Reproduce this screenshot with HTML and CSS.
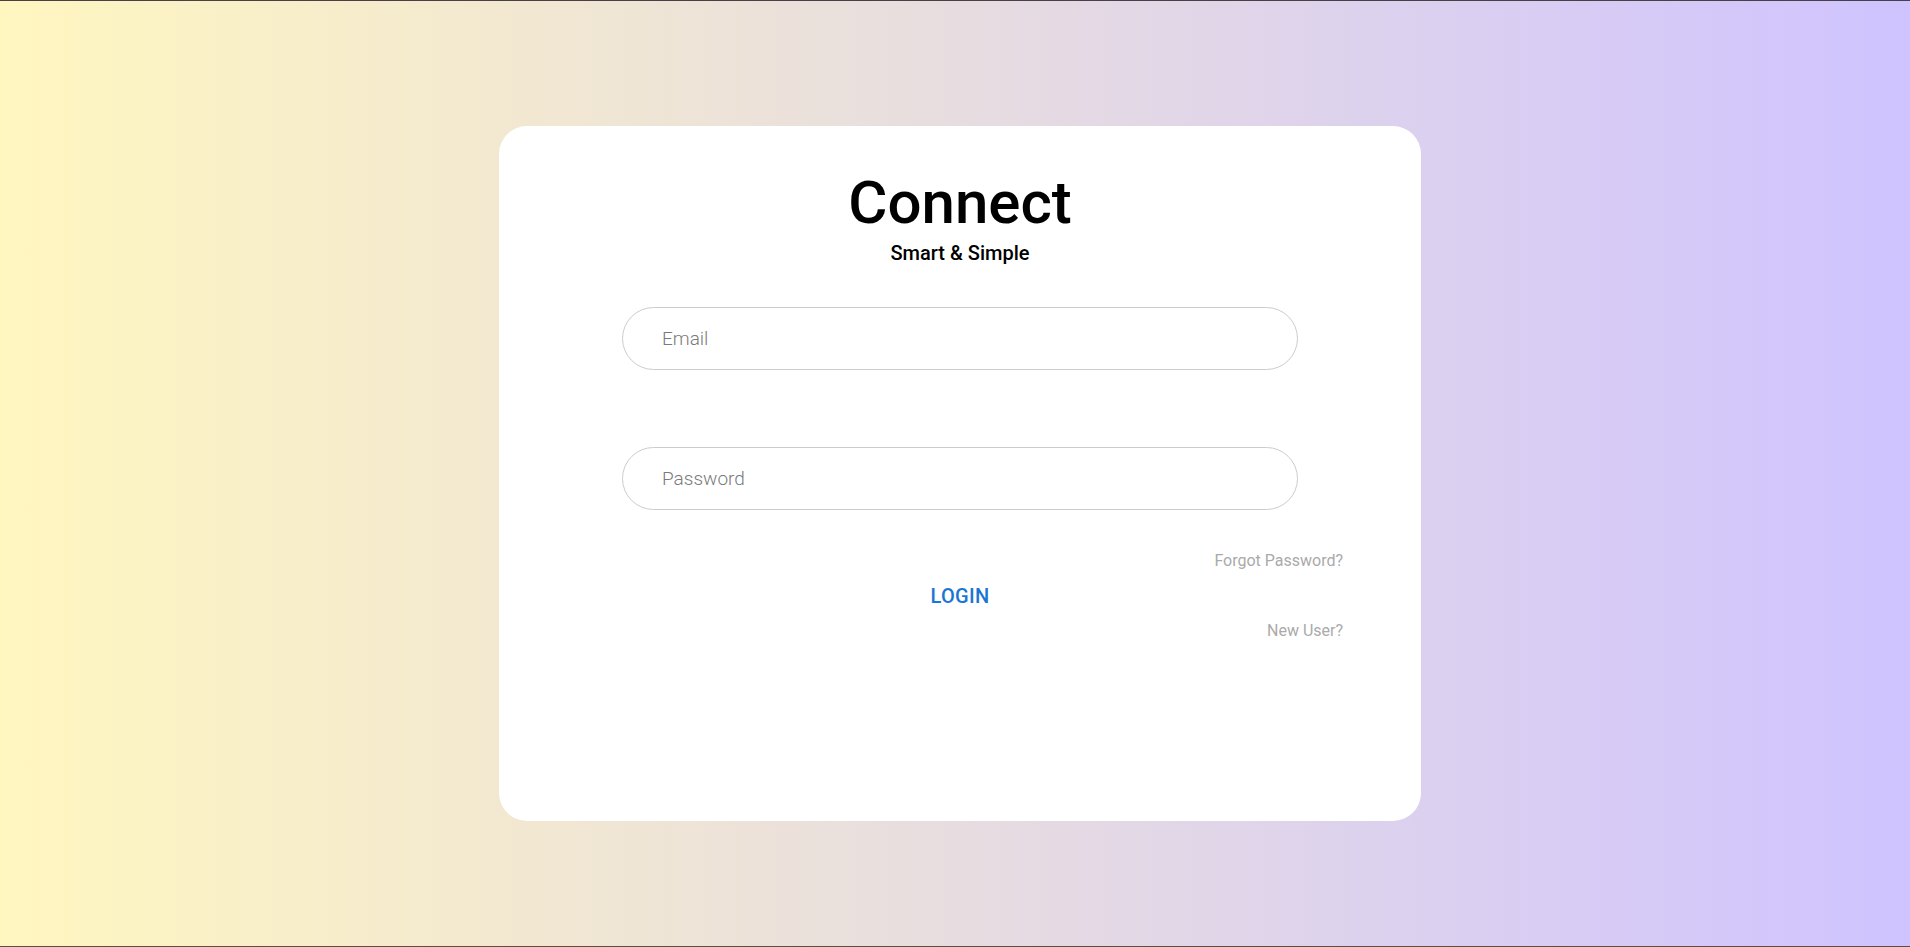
FILE: index.html
```html
<!DOCTYPE html>
<html lang="en">
<head>
<meta charset="utf-8">
<title>Connect</title>
<link rel="stylesheet" href="styles.css">
</head>
<body>
<main class="page">
  <section class="card">
    <h1 class="title">Connect</h1>
    <p class="subtitle">Smart &amp; Simple</p>
    <form class="form">
      <input class="field" type="email" placeholder="Email">
      <input class="field field-password" type="password" placeholder="Password">
      <div class="link-row link-forgot"><a class="link" href="#">Forgot Password?</a></div>
      <button class="login" type="button">LOGIN</button>
      <div class="link-row link-new"><a class="link" href="#">New User?</a></div>
    </form>
  </section>
</main>
</body>
</html>
```

FILE: styles.css
```css
* { box-sizing: border-box; }
html, body { margin: 0; padding: 0; }
body {
  height: 100vh;
  font-family: Roboto, "Liberation Sans", sans-serif;
  background: linear-gradient(to right, #fff6c0 0%, #cfc3ff 100%);
  border-top: 1px solid #483f47;
  border-bottom: 1px solid #5e4e3c;
}
.page {
  height: 100%;
  display: flex;
  align-items: center;
  justify-content: center;
  padding-left: 10px;
}
.card {
  width: 922px;
  height: 695px;
  background: #fff;
  border-radius: 28px;
  padding-top: 41px;
  display: flex;
  flex-direction: column;
  align-items: center;
}
.title {
  margin: 0;
  font-size: 60px;
  line-height: 72px;
  font-weight: 500;
  color: #000;
}
.subtitle {
  margin: 2px 0 0;
  font-size: 20px;
  line-height: 24px;
  font-weight: 500;
  color: #000;
}
.form {
  width: 100%;
  margin-top: 42px;
  display: flex;
  flex-direction: column;
  align-items: center;
}
.field {
  width: 676px;
  height: 63px;
  border: 1px solid #cccccc;
  border-radius: 32px;
  padding: 0 0 0 39px;
  font-family: Roboto, "Liberation Sans", sans-serif;
  font-size: 19px;
  font-weight: 300;
  color: #333;
  outline: none;
  background: #fff;
}
.field::placeholder { color: #7a7a7a; opacity: 1; }
.field-password { margin-top: 77px; }
.link-row {
  width: 100%;
  display: flex;
  justify-content: flex-end;
  padding-right: 78px;
  font-size: 16px;
  line-height: 20px;
}
.link-forgot { margin-top: 41px; }
.link-new { margin-top: 13px; }
.link {
  color: #aaaaaa;
  text-decoration: none;
}
.login {
  margin-top: 13px;
  border: none;
  background: none;
  padding: 0;
  font-family: Roboto, "Liberation Sans", sans-serif;
  font-size: 20px;
  line-height: 24px;
  font-weight: 500;
  letter-spacing: 0.3px;
  color: #1976d2;
  cursor: pointer;
}
```
